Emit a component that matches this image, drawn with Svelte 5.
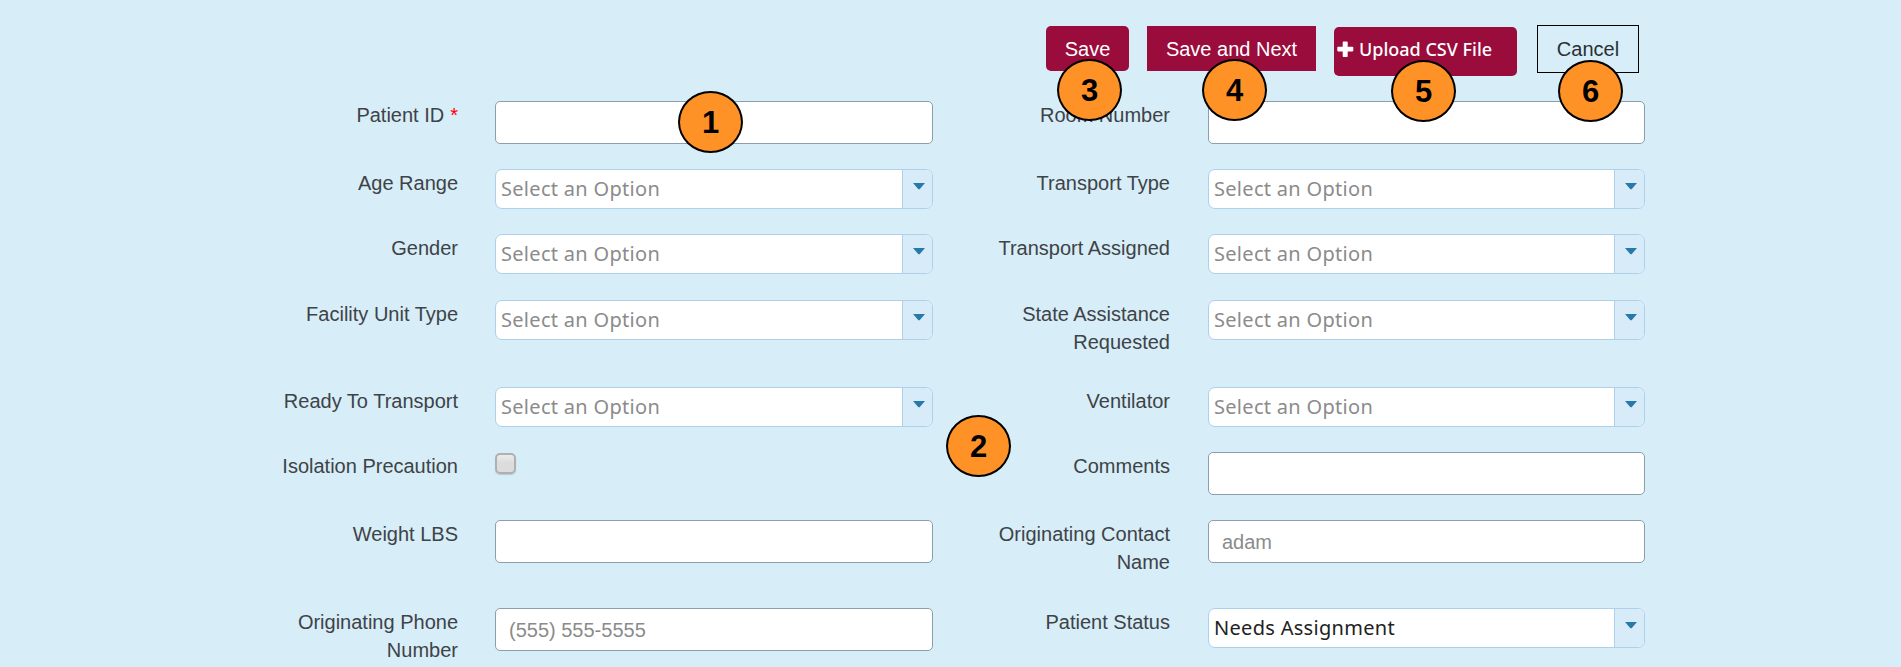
<script>
  const option = 'Select an Option';
  const left = [
    { label: 'Patient ID', required: true, type: 'text' },
    { label: 'Age Range', type: 'select', value: option },
    { label: 'Gender', type: 'select', value: option },
    { label: 'Facility Unit Type', type: 'select', value: option },
    { label: 'Ready To Transport', type: 'select', value: option },
    { label: 'Isolation Precaution', type: 'check' },
    { label: 'Weight LBS', type: 'text' },
    { label: 'Originating Phone Number', type: 'text', value: '(555) 555-5555' }
  ];
  const right = [
    { label: 'Room Number', type: 'text' },
    { label: 'Transport Type', type: 'select', value: option },
    { label: 'Transport Assigned', type: 'select', value: option },
    { label: 'State Assistance Requested', type: 'select', value: option },
    { label: 'Ventilator', type: 'select', value: option },
    { label: 'Comments', type: 'text' },
    { label: 'Originating Contact Name', type: 'text', value: 'adam' },
    { label: 'Patient Status', type: 'select', value: 'Needs Assignment', chosen: true }
  ];
  const badges = [
    { n: 1, x: 678, y: 91 },
    { n: 2, x: 946, y: 415 },
    { n: 3, x: 1057, y: 59 },
    { n: 4, x: 1202, y: 59 },
    { n: 5, x: 1391, y: 60 },
    { n: 6, x: 1558, y: 60 }
  ];
</script>

{#snippet field(f)}
  <div class="label">{f.label}{#if f.required}<span class="star">*</span>{/if}</div>
  <div class="control">
    {#if f.type === 'text'}
      <div class="input">{f.value ?? ''}</div>
    {:else if f.type === 'select'}
      <div class="select">
        <span class="value" class:chosen={f.chosen}>{f.value}</span>
        <span class="trigger"><svg width="12" height="7" viewBox="0 0 12 7"><path d="M0 0H12L6.6 6.2H5.4Z" fill="#2779aa" /></svg></span>
      </div>
    {:else}
      <div class="check"></div>
    {/if}
  </div>
{/snippet}

<main>
  <header>
    <div class="btn save">Save</div>
    <div class="btn next">Save and Next</div>
    <div class="btn upload">
      <svg width="17" height="17" viewBox="0 0 17 17"><path d="M5.7 1.2Q5.7 0.4 6.5 0.4H9.9Q10.7 0.4 10.7 1.2V5.8H15.5Q16.3 5.8 16.3 6.6V9.6Q16.3 10.4 15.5 10.4H10.7V15.2Q10.7 16 9.9 16H6.5Q5.7 16 5.7 15.2V10.4H1.1Q.3 10.4 .3 9.6V6.6Q.3 5.8 1.1 5.8H5.7Z" fill="#fff" /></svg>
      <span>Upload CSV File</span>
    </div>
    <div class="btn cancel">Cancel</div>
  </header>
  <div class="columns">
    <section class="form left">{#each left as f}{@render field(f)}{/each}</section>
    <section class="form right">{#each right as f}{@render field(f)}{/each}</section>
  </div>
  {#each badges as b}
    <div class="badge" style="left:{b.x}px;top:{b.y}px">{b.n}</div>
  {/each}
</main>

<style>
  :global(body) { margin: 0; background: #d7edf8; }
  * { box-sizing: border-box; }
  main {
    position: relative;
    width: 1901px;
    height: 667px;
    overflow: hidden;
    background: #d7edf8;
    font-family: "Liberation Sans", Arial, sans-serif;
    font-size: 20px;
    color: #3e4347;
  }
  header {
    display: flex;
    align-items: flex-start;
    height: 101px;
    padding: 25px 0 0 1046px;
  }
  .btn {
    display: flex;
    align-items: center;
    justify-content: center;
    height: 45px;
    margin-top: 1px;
    padding-top: 2px;
    background: #990c3c;
    color: #fff;
    white-space: nowrap;
  }
  .save { width: 83px; border-radius: 5px; }
  .next { width: 169px; margin-left: 18px; }
  .upload {
    width: 183px;
    height: 49px;
    margin: 2px 0 0 18px;
    padding: 0 0 5px 3px;
    justify-content: flex-start;
    gap: 5px;
    border-radius: 5px;
    font: 500 18px "Noto Sans", sans-serif;
  }
  .cancel {
    width: 102px;
    height: 48px;
    margin: 0 0 0 20px;
    padding-top: 1px;
    background: none;
    border: 1px solid #000;
    color: #2b2f33;
  }
  .columns { display: flex; padding-left: 258px; gap: 37px; }
  .form {
    display: grid;
    grid-template-rows: 68px 65.4px 65.4px 87.2px 65.4px 68px 87.6px 60px;
  }
  .left { grid-template-columns: 200px 438px; column-gap: 37px; }
  .right { grid-template-columns: 200px 437px; column-gap: 38px; }
  .label { text-align: right; line-height: 28px; color: #3e4347; }
  .star { color: #f00; font-size: 20px; margin-left: 6px; }
  .input {
    height: 43px;
    padding-left: 13px;
    line-height: 42px;
    background: #fff;
    border: 1px solid #8a9eac;
    border-radius: 5px;
    color: #8b8b8b;
  }
  .select {
    display: flex;
    height: 40px;
    background: #fff;
    border: 1px solid #aed0ea;
    border-radius: 7px;
    overflow: hidden;
  }
  .value {
    flex: 1;
    padding-left: 5px;
    line-height: 38px;
    font-family: "Noto Sans", sans-serif;
    letter-spacing: .3px;
    color: #8b8b8b;
  }
  .chosen { color: #222; }
  .trigger {
    width: 30px;
    border-left: 1px solid #aed0ea;
    background: #d7ebf9;
    padding: 13px 0 0 9.6px;
  }
  .trigger svg { display: block; }
  .check {
    width: 21px;
    height: 21px;
    margin-top: 1px;
    border: 2px solid #b0b0b0;
    border-radius: 5px;
    background: linear-gradient(#ececec, #dcdcdc 45%);
    box-shadow: 0 1px 1px rgba(0, 0, 0, .15);
  }
  .badge {
    position: absolute;
    width: 65px;
    height: 62px;
    border: 2px solid #000;
    border-radius: 50%;
    background: #ff9226;
    color: #000;
    font-weight: 700;
    font-size: 31px;
    line-height: 59px;
    text-align: center;
  }
</style>
